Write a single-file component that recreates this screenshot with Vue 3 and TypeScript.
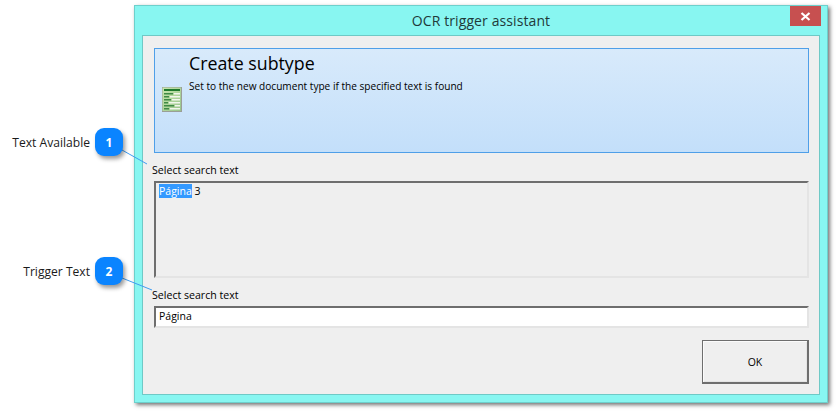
<template>
  <div class="page">
    <div class="window">
      <header class="titlebar">
        <span class="title">OCR trigger assistant</span>
        <button class="close" aria-label="Close">
          <svg width="11" height="9" viewBox="0 0 11 9">
            <path d="M1.5 1 L9.5 8 M9.5 1 L1.5 8" stroke="#fff" stroke-width="2.2" fill="none" />
          </svg>
        </button>
      </header>
      <main class="client">
        <section class="banner">
          <div class="banner-icon">
            <svg width="20" height="25" viewBox="0 0 20 25">
              <rect x="0" y="0" width="20" height="25" fill="#9a9f96" />
              <rect x="0.5" y="0.5" width="18.5" height="23.5" fill="url(#sheet)" />
              <rect x="2" y="2" width="16" height="2" fill="#1f7a2c" />
              <g v-for="row in iconRows" :key="row.y">
                <rect x="2" :y="row.y" :width="row.dark" height="1.5" fill="#3f8a45" />
                <rect :x="row.dark + 3" :y="row.y" :width="15 - row.dark" height="1.5" fill="#f1f6ec" />
              </g>
              <defs>
                <linearGradient id="sheet" x1="0" y1="0" x2="1" y2="1">
                  <stop offset="0" stop-color="#c9e6ae" />
                  <stop offset="1" stop-color="#97c58a" />
                </linearGradient>
              </defs>
            </svg>
          </div>
          <div class="banner-text">
            <h1>Create subtype</h1>
            <p>Set to the new document type if the specified text is found</p>
          </div>
        </section>

        <label class="field-label first">Select search text</label>
        <div class="text-box"><span class="selected">Página</span> 3</div>

        <label class="field-label second">Select search text</label>
        <div class="input">Página</div>

        <div class="actions">
          <button class="ok">OK</button>
        </div>
      </main>
    </div>

    <svg class="connectors" width="837" height="412">
      <line x1="122" y1="150" x2="147" y2="164" />
      <line x1="122" y1="278" x2="152" y2="290" />
    </svg>

    <div v-for="c in callouts" :key="c.id" class="callout" :class="`callout-${c.id}`">
      <span class="callout-label">{{ c.label }}</span>
      <span class="bubble">{{ c.id }}</span>
    </div>
  </div>
</template>

<script setup lang="ts">
interface Callout {
  id: number
  label: string
}

const callouts: Callout[] = [
  { id: 1, label: 'Text Available' },
  { id: 2, label: 'Trigger Text' }
]

const iconRows = [
  { y: 6, dark: 9 },
  { y: 9, dark: 5 },
  { y: 12, dark: 7 },
  { y: 15, dark: 4 },
  { y: 18, dark: 10 },
  { y: 21, dark: 5 }
]
</script>

<style>
html,
body {
  margin: 0;
  background: #fff;
}
</style>

<style scoped>
.page {
  position: relative;
  width: 837px;
  height: 412px;
  overflow: hidden;
  background: #fff;
  font-family: "Open Sans", "Noto Sans", sans-serif;
  color: #000;
}

.window {
  position: absolute;
  left: 134px;
  top: 5px;
  width: 694px;
  height: 398px;
  box-sizing: border-box;
  display: flex;
  flex-direction: column;
  padding: 0 7px 7px;
  background: #88f6f1;
  border: 1px solid #6dd0cc;
  box-shadow: 2px 2px 4px rgba(0, 0, 0, 0.55);
}

.titlebar {
  position: relative;
  height: 29px;
  flex: none;
  display: flex;
  align-items: center;
  justify-content: center;
}

.title {
  font-size: 14px;
  color: #1f3a3a;
  letter-spacing: 0.1px;
}

.close {
  position: absolute;
  top: 0;
  right: -1px;
  width: 31px;
  height: 20px;
  padding: 0;
  border: 0;
  background: #c75050;
  display: flex;
  align-items: center;
  justify-content: center;
}

.client {
  flex: 1;
  display: flex;
  flex-direction: column;
  padding: 12px 10px 0 11px;
  background: #efefef;
  border: 1px solid #6fc9c6;
  box-sizing: border-box;
}

.banner {
  height: 105px;
  flex: none;
  box-sizing: border-box;
  display: flex;
  background: linear-gradient(#d8eafb, #c3dffa);
  border: 1px solid #4f9fe8;
}

.banner-icon {
  width: 34px;
  flex: none;
  padding: 38px 0 0 7px;
  box-sizing: border-box;
}

.banner-text h1 {
  margin: 2px 0 0;
  font-size: 17.8px;
  line-height: 25px;
  font-weight: 400;
}

.banner-text p {
  margin: 3px 0 0;
  font-size: 10.1px;
  line-height: 14px;
}

.field-label {
  font-size: 10.6px;
  line-height: 14px;
  margin-left: -2px;
}

.field-label.first {
  margin-top: 10px;
}

.field-label.second {
  margin-top: 10px;
}

.text-box {
  height: 97px;
  margin-top: 4px;
  flex: none;
  box-sizing: border-box;
  padding: 1px 3px;
  font-size: 10.5px;
  line-height: 14px;
  border: 2px solid;
  border-color: #6e6e6e #e4e4e4 #e4e4e4 #6e6e6e;
  background: #efefef;
}

.selected {
  background: #3399ff;
  color: #fff;
}

.input {
  height: 22px;
  margin-top: 4px;
  flex: none;
  box-sizing: border-box;
  padding: 1px 3px;
  font-size: 10.5px;
  line-height: 15px;
  border: 2px solid;
  border-color: #6e6e6e #e4e4e4 #e4e4e4 #6e6e6e;
  background: #fff;
}

.actions {
  display: flex;
  justify-content: flex-end;
  margin-top: 12px;
}

.ok {
  width: 107px;
  height: 44px;
  padding: 0;
  box-sizing: border-box;
  font-family: inherit;
  font-size: 10.5px;
  color: #000;
  background: #efefef;
  border-style: solid;
  border-color: #6e6e6e;
  border-width: 1px 2px 2px 1px;
  box-shadow: inset 1px 1px 0 #fbfbfb, inset -1px -1px 0 #e4e4e4;
}

.connectors {
  position: absolute;
  left: 0;
  top: 0;
  pointer-events: none;
}

.connectors line {
  stroke: #3f9df2;
  stroke-width: 1;
}

.callout {
  position: absolute;
  right: 714px;
  display: flex;
  align-items: center;
  gap: 5px;
}

.callout-1 {
  top: 128px;
}

.callout-2 {
  top: 257px;
}

.callout-label {
  font-size: 12.1px;
  color: #1a1a1a;
}

.bubble {
  width: 28px;
  height: 28px;
  border-radius: 9px;
  background: #0a84ff;
  color: #fff;
  font-size: 12px;
  font-weight: 700;
  display: flex;
  align-items: center;
  justify-content: center;
  box-shadow: 2px 3px 4px rgba(0, 0, 0, 0.4);
}
</style>
